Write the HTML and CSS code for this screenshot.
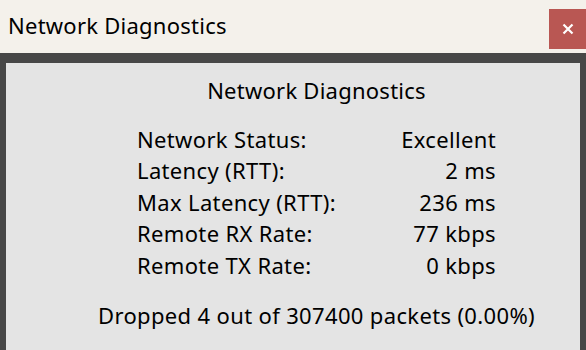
FILE: index.html
```html
<!DOCTYPE html>
<html lang="en">
  <head>
    <meta charset="UTF-8" />
    <title>Network Diagnostics</title>
    <link rel="stylesheet" href="styles.css">
  </head>
  <body>
    <div class="titlebar">
      <span class="title">Network Diagnostics</span>
      <button class="close-btn" type="button">
        <svg width="12" height="12" viewBox="0 0 12 12">
          <path d="M1.5 1.5 L10.5 10.5 M10.5 1.5 L1.5 10.5" stroke="#fff" stroke-width="2.2" />
        </svg>
      </button>
    </div>

    <div class="frame">
      <div class="panel">
        <h2 class="heading">Network Diagnostics</h2>
        <div class="stats">
          <span>Network Status:</span><span class="val">Excellent</span>
          <span>Latency (RTT):</span><span class="val">2 ms</span>
          <span>Max Latency (RTT):</span><span class="val">236 ms</span>
          <span>Remote RX Rate:</span><span class="val">77 kbps</span>
          <span>Remote TX Rate:</span><span class="val">0 kbps</span>
        </div>
        <p class="dropped">Dropped 4 out of 307400 packets (0.00%)</p>
      </div>
    </div>
  </body>
</html>
```

FILE: styles.css
```css
body {
  margin: 0;
  width: 586px;
  height: 350px;
  overflow: hidden;
  font-family: "Noto Sans", "Open Sans", sans-serif;
  color: #000;
  background: #474747;
}

.titlebar {
  display: flex;
  justify-content: space-between;
  align-items: flex-start;
  height: 53px;
  background: #f4f1eb;
}

.title {
  font-size: 22px;
  letter-spacing: 0.25px;
  padding: 10px 0 0 8px;
}

.close-btn {
  margin-top: 9px;
  width: 37px;
  height: 40px;
  border: none;
  padding: 0;
  background: #b95753;
  display: flex;
  justify-content: center;
  align-items: center;
}

.frame {
  padding: 10px 6px 0 6px;
}

/* content is centred a bit right of the window middle */
.panel {
  background: #e4e4e4;
  height: 287px;
  padding-left: 47px;
  display: flex;
  flex-direction: column;
  align-items: center;
  font-size: 22px;
  letter-spacing: 0.35px;
  line-height: 31.5px;
}

.heading {
  font-size: 22px;
  font-weight: normal;
  letter-spacing: 0.25px;
  margin: 12px 0 17px 0;
}

.stats {
  display: grid;
  grid-template-columns: auto auto;
  width: 359px;
}

.val {
  text-align: right;
}

.dropped {
  margin: 19px 0 0 0;
}
```
